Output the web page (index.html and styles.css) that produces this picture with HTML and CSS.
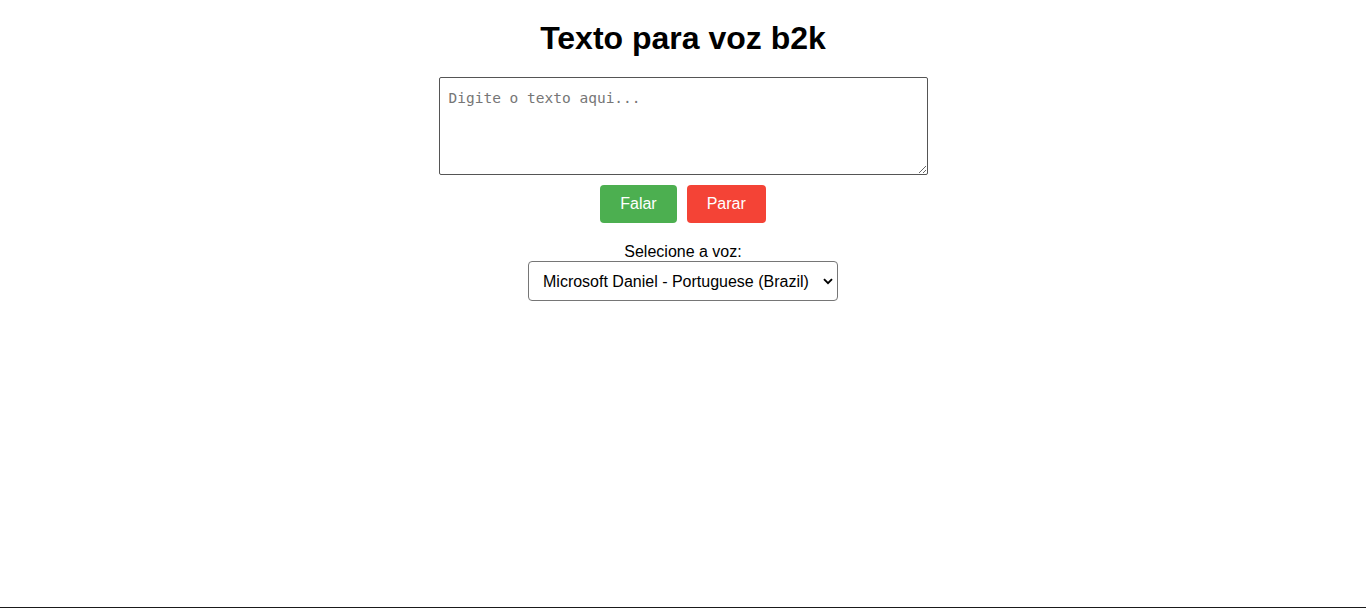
FILE: index.html
```html
<!DOCTYPE html>
<html lang="pt-BR">
<head>
<meta charset="utf-8">
<title>Texto para voz b2k</title>
<link rel="stylesheet" href="styles.css">
</head>
<body>
<main class="app">
  <h1 class="title">Texto para voz b2k</h1>
  <textarea class="text-input" placeholder="Digite o texto aqui..."></textarea>
  <div class="actions">
    <button class="btn btn-speak" type="button">Falar</button>
    <button class="btn btn-stop" type="button">Parar</button>
  </div>
  <label class="voice-label" for="voice">Selecione a voz:</label>
  <span class="select-wrap">
    <select id="voice" class="voice-select">
      <option>Microsoft Daniel - Portuguese (Brazil)</option>
    </select>
    <svg class="chevron" width="10" height="7" viewBox="0 0 10 7" aria-hidden="true"><path d="M1 1.2 L5 5.2 L9 1.2" fill="none" stroke="#000" stroke-width="1.9"/></svg>
  </span>
</main>
<div class="bottom-edge"></div>
</body>
</html>
```

FILE: styles.css
```css
html, body {
  margin: 0;
  padding: 0;
  background: #fff;
}

body {
  font-family: "Liberation Sans", Arial, sans-serif;
  font-size: 16px;
  color: #000;
}

.app {
  display: flex;
  flex-direction: column;
  align-items: center;
  padding-top: 20px;
}

.title {
  margin: 0 0 20px;
  font-size: 32px;
  font-weight: bold;
  line-height: 37px;
}

.text-input {
  box-sizing: border-box;
  width: 489px;
  height: 98px;
  margin: 0;
  padding: 12px 9px 9px;
  border: 1px solid #555;
  border-radius: 2px;
  font-family: "DejaVu Sans Mono", "Liberation Mono", monospace;
  font-size: 14.5px;
  line-height: 17px;
  color: #000;
}

.text-input::placeholder {
  color: #767676;
}

.actions {
  display: flex;
  gap: 10px;
  margin-top: 10px;
}

.btn {
  box-sizing: border-box;
  height: 38px;
  padding: 0 20px;
  border: none;
  border-radius: 4px;
  font-family: "Liberation Sans", Arial, sans-serif;
  font-size: 16px;
  color: #fff;
  cursor: pointer;
}

.btn-speak {
  background: #4caf50;
}

.btn-stop {
  background: #f44336;
}

.voice-label {
  display: block;
  margin-top: 19px;
  line-height: 19px;
}

.select-wrap {
  position: relative;
  display: block;
}

.voice-select {
  box-sizing: border-box;
  width: 310px;
  height: 40px;
  margin: 0;
  padding: 0 20px 0 14px;
  border: 1px solid #767676;
  border-radius: 4px;
  background: #fff;
  font-family: "Liberation Sans", Arial, sans-serif;
  font-size: 16px;
  color: #000;
  -webkit-appearance: none;
  appearance: none;
}

.chevron {
  position: absolute;
  right: 5px;
  top: 17px;
}

.bottom-edge {
  position: fixed;
  left: 0;
  right: 0;
  bottom: 0;
  height: 1px;
  background: #1a1a1a;
}
```
